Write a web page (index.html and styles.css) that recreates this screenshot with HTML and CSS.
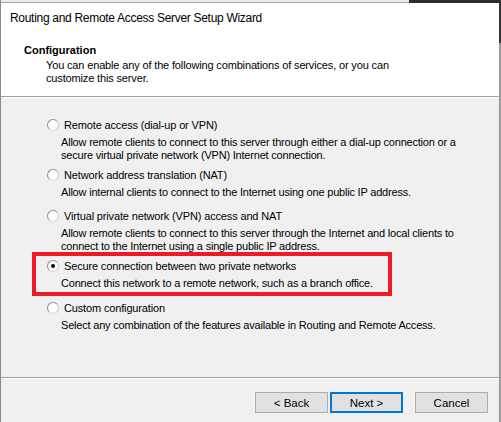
FILE: index.html
```html
<!DOCTYPE html>
<html>
<head>
<meta charset="utf-8">
<link rel="stylesheet" href="styles.css">
</head>
<body>
<div class="screen">
  <div class="window">
    <div class="topstrip"><div class="strip-left"></div><div class="strip-right"></div></div>
    <div class="header">
      <div class="title">Routing and Remote Access Server Setup Wizard</div>
      <div class="page-title">Configuration</div>
      <p class="page-desc">You can enable any of the following combinations of services, or you can<br>customize this server.</p>
    </div>
    <div class="content">
      <div class="options">
        <div class="option">
          <div class="opt-label"><span class="radio"></span>Remote access (dial-up or VPN)</div>
          <p class="opt-desc">Allow remote clients to connect to this server through either a dial-up connection or a<br>secure virtual private network (VPN) Internet connection.</p>
        </div>
        <div class="option">
          <div class="opt-label"><span class="radio"></span>Network address translation (NAT)</div>
          <p class="opt-desc">Allow internal clients to connect to the Internet using one public IP address.</p>
        </div>
        <div class="option">
          <div class="opt-label"><span class="radio"></span>Virtual private network (VPN) access and NAT</div>
          <p class="opt-desc">Allow remote clients to connect to this server through the Internet and local clients to<br>connect to the Internet using a single public IP address.</p>
        </div>
        <div class="option highlight">
          <div class="opt-label"><span class="radio checked"></span>Secure connection between two private networks</div>
          <p class="opt-desc">Connect this network to a remote network, such as a branch office.</p>
        </div>
        <div class="option last">
          <div class="opt-label"><span class="radio"></span>Custom configuration</div>
          <p class="opt-desc">Select any combination of the features available in Routing and Remote Access.</p>
        </div>
      </div>
    </div>
    <div class="footer">
      <button class="btn">&lt; Back</button>
      <button class="btn btn-default">Next &gt;</button>
      <button class="btn btn-cancel">Cancel</button>
    </div>
  </div>
  <div class="edge"></div>
</div>
</body>
</html>
```
FILE: styles.css
```css
html, body {
  margin: 0;
  padding: 0;
}
body {
  width: 501px;
  height: 422px;
  overflow: hidden;
  font-family: "Liberation Sans", Arial, sans-serif;
  font-size: 11px;
  letter-spacing: -0.2px;
  color: #000;
  background: #f0f0f0;
}
.screen {
  display: flex;
  height: 422px;
}
.window {
  flex: 1;
  display: flex;
  flex-direction: column;
  border-left: 1px solid #8a8a8a;
  background: #f0f0f0;
}
.edge {
  width: 2px;
  background: linear-gradient(#333 0, #333 43px, #9a9a9a 43px, #9a9a9a 100%);
}
.topstrip {
  display: flex;
  height: 3px;
}
.strip-left {
  flex: 1;
  background: #ececec;
  border-bottom: 1px solid #a8a8a8;
}
.strip-right {
  width: 90px;
  background: #2d2d2d;
}
.header {
  background: #fff;
  height: 94px;
  box-sizing: border-box;
  padding: 7px 0 0 9px;
  border-bottom: 1px solid #a0a0a0;
  box-shadow: 0 1px 0 #fff;
}
.title {
  font-size: 12px;
  line-height: 16px;
  letter-spacing: -0.3px;
}
.page-title {
  font-weight: bold;
  line-height: 13px;
  margin: 18px 0 0 14px;
  letter-spacing: 0;
}
.page-desc {
  margin: 2px 0 0 36px;
  line-height: 13px;
  letter-spacing: -0.15px;
}
.content {
  flex: 1;
  padding: 19px 0 0 46px;
}
.options {
  display: flex;
  flex-direction: column;
  gap: 4px;
}
.option {
  position: relative;
}
.option.last {
  margin-top: 1px;
}
.opt-label {
  display: flex;
  align-items: center;
  gap: 5px;
  height: 18px;
  letter-spacing: -0.15px;
}
.opt-desc {
  margin: 2px 0 0 14px;
  line-height: 13px;
  min-height: 17px;
}
.radio {
  width: 12px;
  height: 12px;
  box-sizing: border-box;
  border-radius: 50%;
  border: 1px solid #8e8e8e;
  border-right-color: #c8c8c8;
  border-bottom-color: #d8d8d8;
  background: #fff;
  display: flex;
  align-items: center;
  justify-content: center;
}
.radio.checked::after {
  content: "";
  width: 4px;
  height: 4px;
  border-radius: 50%;
  background: #000;
}
.highlight::after {
  content: "";
  position: absolute;
  left: -15px;
  top: -5px;
  width: 360px;
  height: 44px;
  box-sizing: border-box;
  border: 4px solid #ed1c24;
}
.footer {
  height: 45px;
  box-sizing: border-box;
  border-top: 1px solid #a0a0a0;
  box-shadow: inset 0 1px 0 #fff;
  display: flex;
  align-items: flex-start;
  justify-content: flex-end;
  padding: 14px 11px 0 0;
  gap: 2px;
}
.btn {
  width: 73px;
  height: 21px;
  box-sizing: border-box;
  background: #e1e1e1;
  border: 1px solid #adadad;
  font-family: "Liberation Sans", Arial, sans-serif;
  font-size: 11.5px;
  letter-spacing: 0;
  color: #000;
  padding: 0;
  margin: 0;
}
.btn-default {
  border: 2px solid #0078d7;
}
.btn-cancel {
  margin-left: 10px;
}
```
